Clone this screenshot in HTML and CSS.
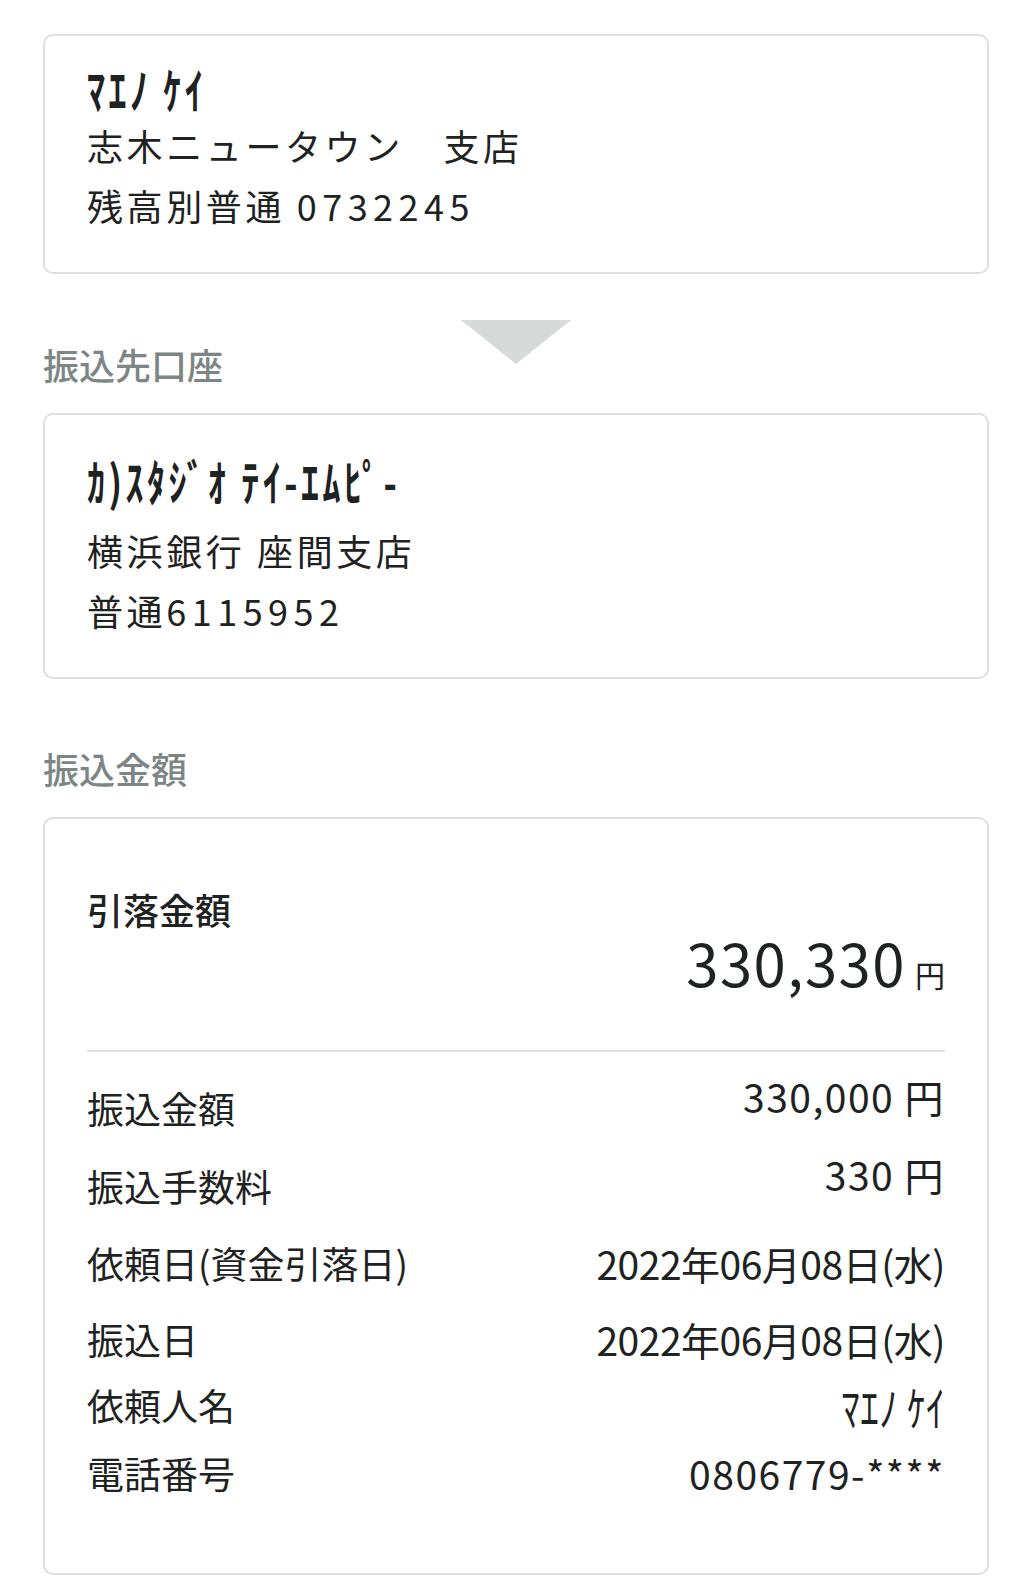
FILE: index.html
```html
<!DOCTYPE html>
<html lang="ja">
  <head>
    <meta charset="UTF-8" />
    <meta name="viewport" content="width=device-width, initial-scale=1.0" />
    <title>振込内容の確認</title>
    <link rel="stylesheet" href="styles.css">
  </head>
  <body>
    <div class="page">
      <!-- 振込元口座 -->
      <div class="card account">
        <div class="account-name">ﾏｴﾉ ｹｲ</div>
        <div class="account-line">志木ニュータウン　支店</div>
        <div class="account-line">残高別普通 <span class="num">0732245</span></div>
      </div>

      <!-- 振込先口座 -->
      <div class="section-head">
        <span class="arrow"></span>
        <h2 class="section-title">振込先口座</h2>
      </div>
      <div class="card account">
        <div class="account-name tall">ｶ)ｽﾀｼﾞｵ ﾃｲ-ｴﾑﾋﾟ-</div>
        <div class="account-line">横浜銀行 座間支店</div>
        <div class="account-line">普通<span class="num">6115952</span></div>
      </div>

      <!-- 振込金額 -->
      <h2 class="section-title spaced">振込金額</h2>
      <div class="card amount-card">
        <div class="total-label">引落金額</div>
        <div class="total">
          <span class="total-num">330,330</span>
          <span class="total-yen">円</span>
        </div>
        <hr class="divider" />

        <div class="row amount">
          <span class="label">振込金額</span>
          <span class="value">330,000 円</span>
        </div>
        <div class="row amount fee">
          <span class="label">振込手数料</span>
          <span class="value">330 円</span>
        </div>
        <div class="row date">
          <span class="label">依頼日(資金引落日)</span>
          <span class="value">2022年06月08日(水)</span>
        </div>
        <div class="row date short">
          <span class="label">振込日</span>
          <span class="value">2022年06月08日(水)</span>
        </div>
        <div class="row">
          <span class="label">依頼人名</span>
          <span class="value kana">ﾏｴﾉ ｹｲ</span>
        </div>
        <div class="row last">
          <span class="label">電話番号</span>
          <span class="value">0806779-****</span>
        </div>
      </div>
    </div>
  </body>
</html>
```

FILE: styles.css
```css
body {
  margin: 0;
  background-color: #fff;
  color: #1e2221;
  font-family: 'Noto Sans CJK JP', 'Noto Sans', sans-serif;
}
.page {
  padding: 34px 43px 20px;
}
.card {
  border: 2px solid #dde1e0;
  border-radius: 10px;
  background-color: #fff;
}
.account {
  padding: 26px 42px 37px;
}
/* half-width kana in the source font are tall and narrow */
.account-name {
  font-size: 36px;
  font-weight: 700;
  line-height: 53px;
  letter-spacing: 3.5px;
  transform: scaleY(1.35);
}
.account-name.tall {
  line-height: 79px;
}
.account-line {
  font-size: 36px;
  line-height: 60px;
  letter-spacing: 3.6px;
}
.account-line .num {
  letter-spacing: 5.5px;
}
.section-head {
  display: grid;
  margin-top: 46px;
}
.section-head > * {
  grid-area: 1 / 1;
}
.arrow {
  justify-self: center;
  align-self: start;
  width: 0;
  height: 0;
  border-left: 55px solid transparent;
  border-right: 55px solid transparent;
  border-top: 44px solid #d6dbda;
}
.section-title {
  margin: 20px 0 25px;
  font-size: 36px;
  font-weight: 500;
  line-height: 48px;
  color: #7d8684;
}
.section-title.spaced {
  margin-top: 65px;
}
.amount-card {
  padding: 66px 42px 76px;
}
.total-label {
  font-size: 36px;
  font-weight: 500;
  line-height: 48px;
}
.total {
  display: flex;
  justify-content: flex-end;
  align-items: baseline;
  gap: 9px;
  line-height: 58px;
}
.total-num {
  font-size: 58px;
  font-weight: 400;
  letter-spacing: 1.5px;
}
.total-yen {
  font-size: 30px;
}
.divider {
  margin: 47px 0 20px;
  border: 0;
  border-top: 2px solid #dde1e0;
}
.row {
  display: flex;
  justify-content: space-between;
  align-items: flex-start;
  font-size: 37px;
  line-height: 48px;
  margin-bottom: 20px;
}
.row .value {
  font-size: 39px;
  letter-spacing: 1.5px;
}
.row.date .value {
  letter-spacing: -0.5px;
}
.row .value.kana {
  font-size: 37px;
  letter-spacing: 0.5px;
  transform: scaleY(1.3);
}
.row.amount .label {
  padding-top: 12px;
}
.row.amount {
  margin-bottom: 18px;
}
.row.fee {
  margin-bottom: 29px;
}
.row.date {
  margin-bottom: 28px;
}
.row.short {
  margin-bottom: 18px;
}
.row.last {
  margin-bottom: 0;
}
```
